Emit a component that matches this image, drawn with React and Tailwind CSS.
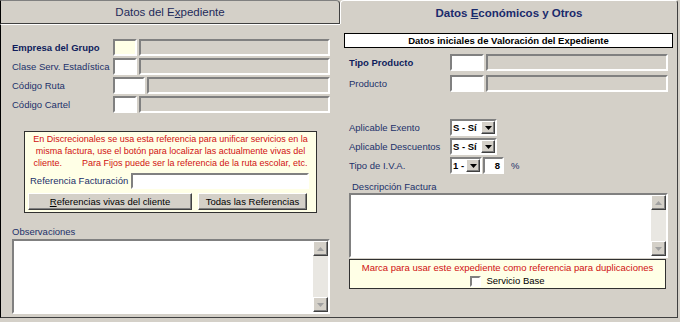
import React from "react";

const sunken =
  "border-2 border-t-[#808080] border-l-[#808080] border-b-white border-r-white";
const raised =
  "border border-t-white border-l-white border-b-[#404040] border-r-[#404040] shadow-[inset_-1px_-1px_0_#808080]";

const Arrow = ({ up }) => (
  <svg width="7" height="4" viewBox="0 0 7 4">
    <path d={up ? "M0 4 L3.5 0 L7 4 Z" : "M0 0 L7 0 L3.5 4 Z"} fill="#a0a0a0" />
  </svg>
);

const DropArrow = () => (
  <svg width="7" height="4" viewBox="0 0 7 4">
    <path d="M0 0 L7 0 L3.5 4 Z" fill="#000" />
  </svg>
);

const Memo = ({ className }) => (
  <div className={`${sunken} bg-white flex ${className}`}>
    <div className="flex-1" />
    <div className="w-[15px] flex flex-col bg-[#e9e7e2]">
      <div className={`h-[15px] bg-[#d4d0c8] flex items-center justify-center ${raised}`}>
        <Arrow up />
      </div>
      <div className="flex-1" />
      <div className={`h-[15px] bg-[#d4d0c8] flex items-center justify-center ${raised}`}>
        <Arrow />
      </div>
    </div>
  </div>
);

const Field = ({ label, bold, small = "w-[24px]", yellow }) => (
  <div className="flex items-center h-[17px]">
    <div
      className={`w-[101px] shrink-0 whitespace-nowrap ${bold ? "font-bold text-[#0f1d5c]" : "text-[#22306a]"}`}
    >
      {label}
    </div>
    <div className={`${sunken} h-full ${small} ${yellow ? "bg-[#ffffe6]" : "bg-white"}`} />
    <div className={`${sunken} h-full flex-1 ml-[2px] bg-[#d4d0c8]`} />
  </div>
);

const Select = ({ value, w }) => (
  <div className={`${sunken} bg-white h-[17px] ${w} flex items-stretch`}>
    <div className="flex-1 font-bold text-black pl-[1px] leading-[13px] whitespace-nowrap">{value}</div>
    <div className={`w-[14px] bg-[#d4d0c8] flex items-center justify-center ${raised}`}>
      <DropArrow />
    </div>
  </div>
);

export default function App() {
  return (
    <div
      className="w-[680px] h-[322px] bg-[#d4d0c8] flex items-start text-[9.5px] leading-[12px] overflow-hidden"
      style={{ fontFamily: '"Liberation Sans", Arial, sans-serif' }}
    >
      {/* Left tab page */}
      <div className="w-[340px] h-[318px] flex flex-col">
        <div className="h-[24px] shrink-0 border border-[#404040] border-l-black border-t-[#808080] rounded-tr-[4px] flex items-center justify-center text-[11.5px] text-[#1e2a5a]">
          <span>
            Datos del E<u>x</u>pediente
          </span>
        </div>
        <div className="flex-1 min-h-0 border-l border-b border-l-black border-b-[#404040] border-t border-t-white pl-[11px] pr-[10px] pt-[14px]">
          <div className="flex flex-col gap-[2px]">
            <Field label="Empresa del Grupo" bold yellow />
            <Field label="Clase Serv. Estadística" />
            <Field label="Código Ruta" small="w-[32px]" />
            <Field label="Código Cartel" />
          </div>

          <div className="mt-[18px] ml-[12px] w-[293px] border border-[#303030] bg-[#ffffe6] pt-[1px] pb-[2px] px-[3px]">
            <div className="text-center text-[#d01010] leading-[12px] text-[9px] whitespace-nowrap -mx-[3px]">
              <div>En Discrecionales se usa esta referencia para unificar servicios en la</div>
              <div>misma factura, use el botón para localizar las actualmente vivas del</div>
              <div>
                cliente.&nbsp;&nbsp;&nbsp;&nbsp;&nbsp;&nbsp;&nbsp;&nbsp;Para Fijos puede ser la referencia de la ruta escolar, etc.
              </div>
            </div>
            <div className="flex items-center mt-[4px] pl-[2px]">
              <span className="text-[#22306a] w-[101px] whitespace-nowrap">Referencia Facturación</span>
              <div className={`${sunken} bg-white h-[16px] w-[178px]`} />
            </div>
            <div className="flex mt-[4px] gap-[6px] h-[17px]">
              <div className={`${raised} w-[164px] bg-[#d4d0c8] flex items-center justify-center text-black`}>
                <span>
                  <u>R</u>eferencias vivas del cliente
                </span>
              </div>
              <div className={`${raised} w-[109px] bg-[#d4d0c8] flex items-center justify-center text-black`}>
                Todas las Referencias
              </div>
            </div>
          </div>

          <div className="mt-[13px] text-[#22306a] h-[12px]">Observaciones</div>
          <Memo className="mt-[1px] h-[75px]" />
        </div>
      </div>

      {/* Right tab page */}
      <div className="w-[338px] h-[318px] flex flex-col">
        <div className="h-[24px] shrink-0 border-t border-l border-r border-t-white border-l-white border-r-[#404040] rounded-tl-[4px] rounded-tr-[3px] flex items-center justify-center text-[11.5px] font-bold text-[#1a2a6c]">
          <span>
            Datos <u>E</u>conómicos y Otros
          </span>
        </div>
        <div className="flex-1 min-h-0 border-r border-b border-[#404040] pl-[9px] pr-[9px]">
          <div className="mt-[9px] -ml-[5px] -mr-[5px] h-[15px] border border-black bg-white flex items-center justify-center font-bold text-black">
            Datos iniciales de Valoración del Expediente
          </div>
          <div className="mt-[6px] flex flex-col gap-[4px]">
            <Field label="Tipo Producto" bold small="w-[34px]" />
            <Field label="Producto" small="w-[34px]" />
          </div>

          <div className="mt-[27px] flex flex-col gap-[2px]">
            <div className="flex items-center">
              <span className="w-[101px] text-[#22306a]">Aplicable Exento</span>
              <Select value="S - Sí" w="w-[47px]" />
            </div>
            <div className="flex items-center">
              <span className="w-[101px] text-[#22306a]">Aplicable Descuentos</span>
              <Select value="S - Sí" w="w-[47px]" />
            </div>
            <div className="flex items-center">
              <span className="w-[101px] text-[#22306a]">Tipo de I.V.A.</span>
              <Select value="1 -" w="w-[32px]" />
              <div className={`${sunken} bg-white h-[17px] w-[21px] ml-[1px] text-right pr-[2px] font-bold text-black leading-[13px]`}>
                8
              </div>
              <span className="ml-[7px] text-[#22306a]">%</span>
            </div>
          </div>

          <div className="mt-[7px] ml-[3px] text-[#22306a] h-[12px]">Descripción Factura</div>
          <Memo className="h-[65px]" />
          <div className="mt-[1px] w-[317px] border border-[#303030] bg-[#ffffe6] h-[30px] flex flex-col items-center">
            <div className="text-[#d01010] mt-[2px] whitespace-nowrap">
              Marca para usar este expediente como referencia para duplicaciones
            </div>
            <div className="flex items-center gap-[5px] mt-[1px]">
              <div className={`${sunken} w-[11px] h-[11px] bg-white`} />
              <span className="text-black">Servicio Base</span>
            </div>
          </div>
        </div>
      </div>
    </div>
  );
}
